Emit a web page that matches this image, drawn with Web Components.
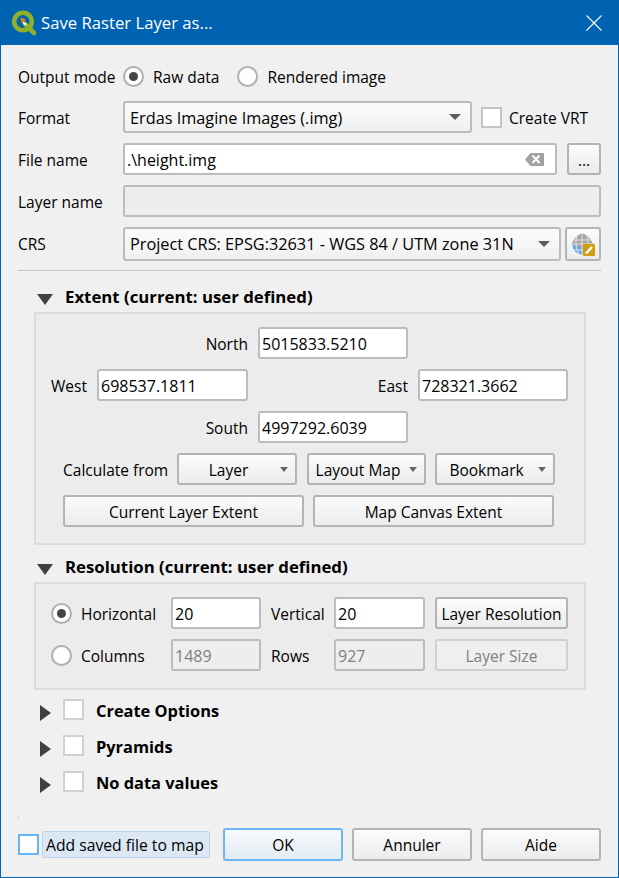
<!DOCTYPE html>
<html>
<head>
<meta charset="utf-8">
<title>Save Raster Layer as...</title>
<style>
  html, body { margin: 0; padding: 0; background: #f0f0f0; }
  body { font: 15.5px "Open Sans", "Noto Sans", sans-serif; color: #000; }
</style>
</head>
<body>
<save-dialog>
  <title-bar slot="title">Save Raster Layer as...</title-bar>

  <form-row label="Output mode" style="height:32px">
    <q-radio checked>Raw data</q-radio>
    <q-radio style="margin-left:18px">Rendered image</q-radio>
  </form-row>
  <form-row label="Format" style="margin-top:9px">
    <q-combo style="width:349px">Erdas Imagine Images (.img)</q-combo>
    <q-check style="margin-left:9px">Create VRT</q-check>
  </form-row>
  <form-row label="File name" style="margin-top:10px">
    <q-field style="width:434px" clear>.\height.img</q-field>
    <q-button style="width:34px;margin-left:10px">...</q-button>
  </form-row>
  <form-row label="Layer name" style="margin-top:10px">
    <q-field style="width:478px" disabled></q-field>
  </form-row>
  <form-row label="CRS" style="margin-top:10px;--shift:0px">
    <q-combo style="width:438px;height:34px">Project CRS: EPSG:32631 - WGS 84 / UTM zone 31N</q-combo>
    <q-button style="width:36px;height:34px;margin-left:4px"><crs-icon></crs-icon></q-button>
  </form-row>
  <h-line></h-line>

  <collapse-group open heading="Extent (current: user defined)" style="margin-top:11px">
    <extent-grid>
      <q-label style="grid-column:1 / 3;justify-content:flex-end">North</q-label>
      <q-field style="grid-column:3">5015833.5210</q-field>
      <q-label style="grid-column:1;justify-content:flex-end">West</q-label>
      <q-field style="grid-column:2">698537.1811</q-field>
      <q-label style="grid-column:3;justify-content:flex-end">East</q-label>
      <q-field style="grid-column:4">728321.3662</q-field>
      <q-label style="grid-column:1 / 3;justify-content:flex-end">South</q-label>
      <q-field style="grid-column:3">4997292.6039</q-field>
    </extent-grid>
    <button-row style="margin-top:10px;padding-left:11px">
      <q-label style="width:114px">Calculate from</q-label>
      <q-menu-button style="width:120px">Layer</q-menu-button>
      <q-menu-button style="width:119px;margin-left:10px">Layout Map</q-menu-button>
      <q-menu-button style="width:120px;margin-left:9px">Bookmark</q-menu-button>
    </button-row>
    <button-row style="margin-top:10px;padding-left:11px">
      <q-button style="width:241px">Current Layer Extent</q-button>
      <q-button style="width:241px;margin-left:9px">Map Canvas Extent</q-button>
    </button-row>
  </collapse-group>

  <collapse-group open heading="Resolution (current: user defined)" style="margin-top:7px">
    <resolution-grid>
      <q-radio checked>Horizontal</q-radio>
      <q-field>20</q-field>
      <q-label>Vertical</q-label>
      <q-field>20</q-field>
      <q-button>Layer Resolution</q-button>
      <q-radio>Columns</q-radio>
      <q-field disabled>1489</q-field>
      <q-label>Rows</q-label>
      <q-field disabled>927</q-field>
      <q-button disabled>Layer Size</q-button>
    </resolution-grid>
  </collapse-group>

  <collapse-group heading="Create Options" style="margin-top:3px"></collapse-group>
  <collapse-group heading="Pyramids"></collapse-group>
  <collapse-group heading="No data values"></collapse-group>
  <resize-dot></resize-dot>

  <dialog-footer slot="footer" style="--shift:0px">
    <q-check focused>Add saved file to map</q-check>
    <q-button primary style="width:120px;height:33px;margin-left:13px">OK</q-button>
    <q-button style="width:120px;height:33px;margin-left:9px">Annuler</q-button>
    <q-button style="width:120px;height:33px;margin-left:9px">Aide</q-button>
  </dialog-footer>
</save-dialog>

<script>
class SaveDialog extends HTMLElement {
  constructor() {
    super();
    this.attachShadow({ mode: 'open' })
    this.shadowRoot.innerHTML = `
      <style>
        :host {
          display: flex;
          flex-direction: column;
          box-sizing: border-box;
          width: 619px;
          height: 878px;
          background: #f0f0f0;
          border: 1px solid #0063b1;
          border-top: 0;
          overflow: hidden;
        }
        main {
          flex: 1;
          display: flex;
          flex-direction: column;
          padding: 15px 17px 0;
        }
        footer {
          padding: 0 17px 16px;
        }
      </style>
      <slot name="title"></slot>
      <main><slot></slot></main>
      <footer><slot name="footer"></slot></footer>
    `
  }
}

class TitleBar extends HTMLElement {
  constructor() {
    super();
    this.attachShadow({ mode: 'open' })
    this.shadowRoot.innerHTML = `
      <style>
        :host {
          display: flex;
          align-items: center;
          height: 45px;
          margin: 0 -1px;
          background: #0063b1;
          color: #fff;
          font-size: 16.7px;
        }
        .logo { margin-left: 11px; width: 26px; height: 26px; flex: none; }
        .text { margin-left: 4px; flex: 1; padding-bottom: 1px; }
        .close { margin-right: 17px; width: 16px; height: 16px; flex: none; }
      </style>
      <svg class="logo" viewBox="0 0 26 26">
        <circle cx="12" cy="11.5" r="8.8" fill="none" stroke="#8fb02b" stroke-width="4.6"/>
        <path d="M14.5 14.5 L23 23" stroke="#8fb02b" stroke-width="4.6" stroke-linecap="round"/>
        <path d="M15 15 L12 12" stroke="#f4f4e4" stroke-width="2.4"/>
        <path d="M9.2 7.6 L15.2 9.4 L11 13.6 Z" fill="#ef7d1a"/>
      </svg>
      <span class="text"><slot></slot></span>
      <svg class="close" viewBox="0 0 16 16">
        <path d="M0.5 0.5 L15.5 15.5 M15.5 0.5 L0.5 15.5" stroke="#fff" stroke-width="1.1" fill="none"/>
      </svg>
    `
  }
}

class FormRow extends HTMLElement {
  constructor() {
    super();
    this.attachShadow({ mode: 'open' })
    this.shadowRoot.innerHTML = `
      <style>
        :host { display: flex; align-items: center; }
        label { width: 105px; flex: none; white-space: nowrap; padding-top: var(--shift, 2px); }
      </style>
      <label></label>
      <slot></slot>
    `
  }

  connectedCallback() {
    this.shadowRoot.querySelector('label').textContent = this.getAttribute('label')
  }
}

class QLabel extends HTMLElement {
  constructor() {
    super();
    this.attachShadow({ mode: 'open' })
    this.shadowRoot.innerHTML = `
      <style>
        :host { display: flex; align-items: center; box-sizing: border-box; white-space: nowrap; height: 32px; padding-top: var(--shift, 2px); }
      </style>
      <slot></slot>
    `
  }
}

class QField extends HTMLElement {
  constructor() {
    super();
    this.attachShadow({ mode: 'open' })
    this.shadowRoot.innerHTML = `
      <style>
        :host {
          display: flex;
          align-items: center;
          box-sizing: border-box;
          height: 32px;
          padding: 0 2px;
          background: #fff;
          border: 2px solid #bcbcbc;
          border-radius: 3px;
          white-space: nowrap;
          font-size: 16px;
        }
        :host([disabled]) { background: #eeeeee; color: #808080; }
        span { flex: 1; padding-top: var(--shift, 2px); }
        svg { display: none; flex: none; width: 19px; height: 13px; margin-right: 9px; }
        :host([clear]) svg { display: block; }
      </style>
      <span><slot></slot></span>
      <svg viewBox="0 0 19 13">
        <path d="M5.5 0 H19 V13 H5.5 L0 6.5 Z" fill="#a2a2a2"/>
        <path d="M7.5 2.5 L14.5 10 M14.5 2.5 L7.5 10" stroke="#fff" stroke-width="2" fill="none"/>
      </svg>
    `
  }
}

class QButton extends HTMLElement {
  constructor() {
    super();
    this.attachShadow({ mode: 'open' })
    this.shadowRoot.innerHTML = `
      <style>
        :host {
          display: flex;
          align-items: center;
          justify-content: center;
          box-sizing: border-box;
          height: 32px;
          padding-top: var(--shift, 2px);
          background: linear-gradient(#fbfbfb, #ececec);
          border: 2px solid #b4b4b4;
          border-radius: 3px;
          white-space: nowrap;
        }
        :host([primary]) {
          background: linear-gradient(#f7fafd, #e2ebf2);
          border-color: #6cb8f6;
        }
        :host([disabled]) {
          background: #efefef;
          border-color: #d0d0d0;
          color: #808080;
        }
      </style>
      <slot></slot>
    `
  }
}

class QCombo extends HTMLElement {
  constructor() {
    super();
    this.attachShadow({ mode: 'open' })
    this.shadowRoot.innerHTML = `
      <style>
        :host {
          display: flex;
          align-items: center;
          box-sizing: border-box;
          height: 32px;
          padding: 0 9px 0 5px;
          background: linear-gradient(#fbfbfb, #f0f0f0);
          border: 2px solid #bcbcbc;
          border-radius: 3px;
          white-space: nowrap;
          font-size: 16.3px;
        }
        span { flex: 1; padding-top: var(--shift, 2px); }
        i { width: 0; height: 0; border: 6px solid transparent; border-top: 6px solid #5c5c5c; border-bottom: 0; }
      </style>
      <span><slot></slot></span><i></i>
    `
  }
}

class QMenuButton extends HTMLElement {
  constructor() {
    super();
    this.attachShadow({ mode: 'open' })
    this.shadowRoot.innerHTML = `
      <style>
        :host {
          display: flex;
          align-items: center;
          box-sizing: border-box;
          height: 32px;
          padding: 0 7px 0 0;
          background: linear-gradient(#fbfbfb, #ececec);
          border: 2px solid #b4b4b4;
          border-radius: 3px;
          white-space: nowrap;
        }
        span { flex: 1; text-align: center; padding-top: var(--shift, 2px); margin-right: 2px; }
        i { width: 0; height: 0; border: 4.5px solid transparent; border-top: 5px solid #666; border-bottom: 0; }
      </style>
      <span><slot></slot></span><i></i>
    `
  }
}

class QRadio extends HTMLElement {
  constructor() {
    super();
    this.attachShadow({ mode: 'open' })
    this.shadowRoot.innerHTML = `
      <style>
        :host { display: flex; align-items: center; white-space: nowrap; height: 32px; }
        i {
          display: flex;
          align-items: center;
          justify-content: center;
          box-sizing: border-box;
          flex: none;
          width: 21px;
          height: 21px;
          margin-right: 9px;
          background: #fff;
          border: 2px solid #b0b0b0;
          border-radius: 50%;
        }
        :host([checked]) i::after {
          content: '';
          width: 9px;
          height: 9px;
          border-radius: 50%;
          background: #444;
        }
        span { padding-top: 2px; }
      </style>
      <i></i><span><slot></slot></span>
    `
  }
}

class QCheck extends HTMLElement {
  constructor() {
    super();
    this.attachShadow({ mode: 'open' })
    this.shadowRoot.innerHTML = `
      <style>
        :host { display: flex; align-items: center; white-space: nowrap; }
        i {
          box-sizing: border-box;
          flex: none;
          width: 21px;
          height: 21px;
          margin-right: 7px;
          background: #fff;
          border: 2px solid #c4c4c4;
        }
        span { padding-top: 2px; }
        :host([focused]) i { border-color: #62b6fb; margin-right: 3px; }
        :host([focused]) span {
          box-sizing: border-box;
          display: flex;
          align-items: center;
          width: 168px;
          height: 27px;
          padding: 0 0 0 3px;
          background: #dbe8f4;
          border: 1px solid #b6d5f0;
          border-radius: 2px;
          font-size: 15.7px;
        }
      </style>
      <i></i><span><slot></slot></span>
    `
  }
}

class CollapseGroup extends HTMLElement {
  constructor() {
    super();
    this.attachShadow({ mode: 'open' })
    this.shadowRoot.innerHTML = `
      <style>
        :host { display: block; margin-left: 16px; margin-right: 15px; }
        header { display: flex; align-items: center; height: 30px; font-weight: 700; font-size: 16.8px; white-space: nowrap; }
        .title { padding-bottom: 2px; }
        .arrow { flex: none; }
        .open-arrow { margin-left: 3px; margin-right: 12px; margin-top: 5px; }
        .shut-arrow { margin-left: 6px; margin-right: 12px; margin-top: 4px; }
        .box { flex: none; box-sizing: border-box; width: 21px; height: 21px; margin-right: 12px; margin-top: -4px; background: #fff; border: 2px solid #d0d0d0; }
        main {
          box-sizing: border-box;
          background: #ececec;
          border: 2px solid #dcdcdc;
          padding: 13px 16px 16px;
        }
        :host(:not([open])) header { height: 36px; font-size: 16.4px; }
        :host([open]) .shut-arrow, :host([open]) .box, :host(:not([open])) .open-arrow, :host(:not([open])) main { display: none; }
      </style>
      <header>
        <svg class="arrow open-arrow" width="16" height="11" viewBox="0 0 16 11"><path d="M0 0 H16 L8 11 Z" fill="#404040"/></svg>
        <svg class="arrow shut-arrow" width="11" height="16" viewBox="0 0 11 16"><path d="M0 0 L11 8 L0 16 Z" fill="#404040"/></svg>
        <span class="box"></span>
        <span class="title"></span>
      </header>
      <main><slot></slot></main>
    `
  }

  connectedCallback() {
    this.shadowRoot.querySelector('.title').textContent = this.getAttribute('heading')
  }
}

class ExtentGrid extends HTMLElement {
  constructor() {
    super();
    this.attachShadow({ mode: 'open' })
    this.shadowRoot.innerHTML = `
      <style>
        :host {
          display: grid;
          grid-template-columns: 35px 151px 150px 150px;
          column-gap: 10px;
          row-gap: 10px;
        }
      </style>
      <slot></slot>
    `
  }
}

class ResolutionGrid extends HTMLElement {
  constructor() {
    super();
    this.attachShadow({ mode: 'open' })
    this.shadowRoot.innerHTML = `
      <style>
        :host {
          display: grid;
          grid-template-columns: 110px 90px 53px 91px 133px;
          column-gap: 10px;
          row-gap: 10px;
          margin-left: -1px;
          margin-right: -1px;
          padding-bottom: 1px;
        }
      </style>
      <slot></slot>
    `
  }
}

class ButtonRow extends HTMLElement {
  constructor() {
    super();
    this.attachShadow({ mode: 'open' })
    this.shadowRoot.innerHTML = `
      <style>
        :host { display: flex; align-items: center; }
      </style>
      <slot></slot>
    `
  }
}

class DialogFooter extends HTMLElement {
  constructor() {
    super();
    this.attachShadow({ mode: 'open' })
    this.shadowRoot.innerHTML = `
      <style>
        :host { display: flex; align-items: center; }
      </style>
      <slot></slot>
    `
  }
}

class HLine extends HTMLElement {
  constructor() {
    super();
    this.attachShadow({ mode: 'open' })
    this.shadowRoot.innerHTML = `
      <style>
        :host { display: block; height: 1px; margin-top: 9px; background: #c4c4c4; }
      </style>
    `
  }
}

class ResizeDot extends HTMLElement {
  constructor() {
    super();
    this.attachShadow({ mode: 'open' })
    this.shadowRoot.innerHTML = `
      <style>
        :host { display: block; width: 1px; height: 1px; margin-top: 16px; background: #a8a8a8; }
      </style>
    `
  }
}

class CrsIcon extends HTMLElement {
  constructor() {
    super();
    this.attachShadow({ mode: 'open' })
    this.shadowRoot.innerHTML = `
      <style>
        :host { display: block; width: 24px; height: 23px; }
      </style>
      <svg width="24" height="23" viewBox="0 0 24 23">
        <circle cx="11" cy="12" r="9.5" fill="#6aa6e2"/>
        <path d="M0.5 11 C4 4 8 1 11 0.5 C14 1 19 4 22 11 C18 15 4 15 0.5 11 Z" fill="#a6a6a6"/>
        <path d="M3 7 H19 M1 11 H21 M11 0.5 V21 M6 3 C4 8 5 16 8 21 M16 3 C18 8 17 16 14 21 M3 17 H19" stroke="#e8e8e8" stroke-width="0.9" fill="none"/>
        <rect x="12" y="11" width="12" height="12" rx="1" fill="#cf9f10"/>
        <path d="M15 20.5 L21 14" stroke="#fff" stroke-width="2.4"/>
      </svg>
    `
  }
}

customElements.define('save-dialog', SaveDialog)
customElements.define('title-bar', TitleBar)
customElements.define('form-row', FormRow)
customElements.define('q-label', QLabel)
customElements.define('q-field', QField)
customElements.define('q-button', QButton)
customElements.define('q-combo', QCombo)
customElements.define('q-menu-button', QMenuButton)
customElements.define('q-radio', QRadio)
customElements.define('q-check', QCheck)
customElements.define('collapse-group', CollapseGroup)
customElements.define('extent-grid', ExtentGrid)
customElements.define('resolution-grid', ResolutionGrid)
customElements.define('button-row', ButtonRow)
customElements.define('dialog-footer', DialogFooter)
customElements.define('h-line', HLine)
customElements.define('resize-dot', ResizeDot)
customElements.define('crs-icon', CrsIcon)
</script>
</body>
</html>
